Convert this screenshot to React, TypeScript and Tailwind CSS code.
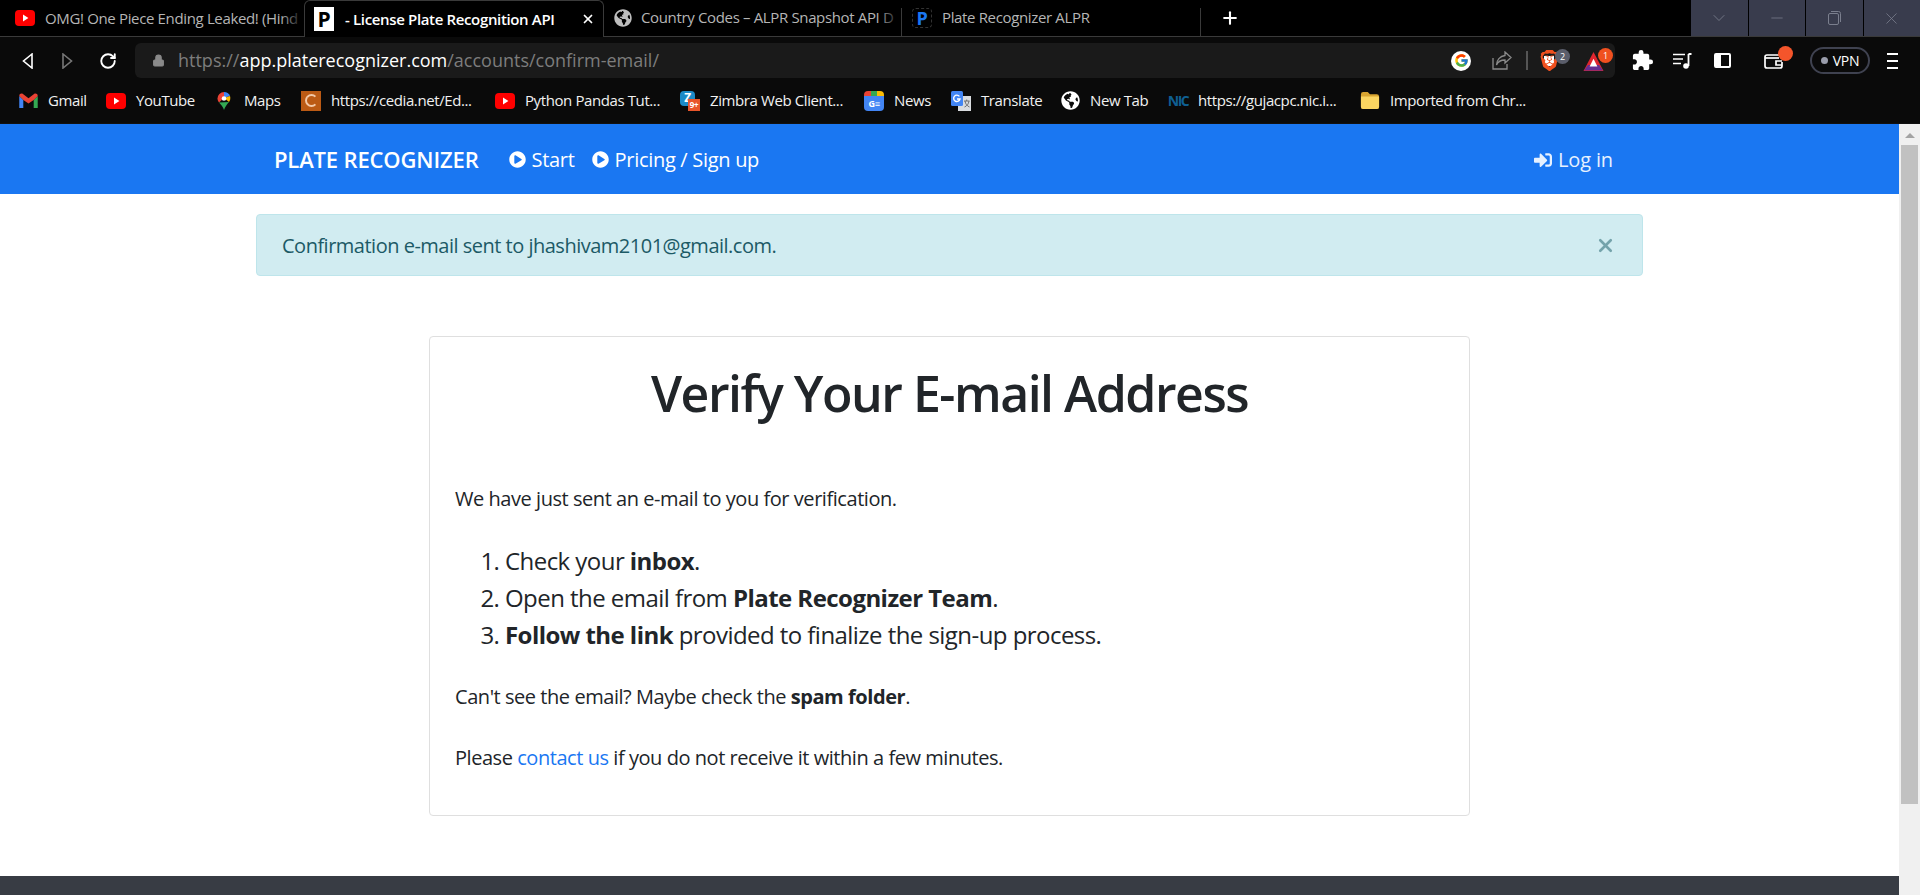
import { Lock, Plus, X, RotateCw, ChevronDown, Minus } from "lucide-react";
import { FaGlobeAmericas, FaPlayCircle, FaSignInAlt } from "react-icons/fa";
import { FcGoogle } from "react-icons/fc";
import { MdExtension } from "react-icons/md";
import { SiBrave } from "react-icons/si";
import type { ReactNode } from "react";

function YouTubeIcon() {
  return (
    <svg width="20" height="16" viewBox="0 0 20 16" className="shrink-0">
      <rect width="20" height="16" rx="4" fill="#f00" />
      <path d="M8 4.6 L13.4 8 L8 11.4 Z" fill="#fff" />
    </svg>
  );
}

function GmailIcon() {
  return (
    <svg width="19" height="15" viewBox="0 0 16 13" className="shrink-0">
      <path d="M0 2.5 V13 H3.5 V6 Z" fill="#4285f4" />
      <path d="M12.5 13 H16 V2.5 L12.5 6 Z" fill="#34a853" />
      <path d="M0 2.5 C0 0.5 2 0 3.2 0.8 L8 4.6 L12.8 0.8 C14 0 16 0.5 16 2.5 L12.5 6 L8 9 L3.5 6 Z" fill="#ea4335" />
    </svg>
  );
}

function MapsIcon() {
  return (
    <svg width="14" height="20" viewBox="0 0 14 18" className="shrink-0">
      <path d="M7 0 A6.5 6.5 0 0 0 0.5 6.5 C0.5 8 1 9 2 10.5 L7 6 Z" fill="#ea4335" />
      <path d="M7 0 A6.5 6.5 0 0 1 13 4 L7 6 Z" fill="#4285f4" />
      <path d="M13 4 C13.8 6.5 13 8.5 12 10 L7 6 Z" fill="#fbbc04" />
      <path d="M2 10.5 L12 10 C10 12.5 8 14.5 7 18 C6.4 15 4 13 2 10.5 Z" fill="#34a853" />
      <circle cx="7" cy="6.5" r="2.3" fill="#fff" />
    </svg>
  );
}

function CediaIcon() {
  return (
    <div className="flex h-5 w-5 shrink-0 items-center justify-center bg-[#bb5a14]">
      <div className="h-[13px] w-[13px] rounded-full border-2 border-[#f3c9a8] border-r-transparent" />
    </div>
  );
}

function ZimbraIcon() {
  return (
    <div className="relative h-5 w-5 shrink-0">
      <div className="flex h-[15px] w-[15px] items-center justify-center rounded-sm bg-[#1b8ac7] text-[12px] font-bold leading-none text-white">
        Z
      </div>
      <div className="absolute bottom-0 right-0 flex h-[12px] w-[12px] items-center justify-center bg-[#e8552a] text-[8px] font-bold leading-none text-white">
        9+
      </div>
    </div>
  );
}

function NewsIcon() {
  return (
    <div className="h-5 w-5 shrink-0 overflow-hidden rounded-sm">
      <div className="flex h-[5px]">
        <div className="w-1/3 bg-[#ea4335]" />
        <div className="w-1/3 bg-[#34a853]" />
        <div className="w-1/3 bg-[#fbbc04]" />
      </div>
      <div className="flex h-[15px] items-center justify-center bg-[#4285f4] text-[9px] font-bold leading-none text-white">
        G≡
      </div>
    </div>
  );
}

function TranslateIcon() {
  return (
    <svg width="20" height="20" viewBox="0 0 20 20" className="shrink-0">
      <rect x="7" y="5" width="13" height="15" fill="#d9dce0" />
      <path d="M13 10 H18.5 M15.7 8.5 V10 M14 10 C14.5 13 16 15 18.5 16 M18 10 C17.5 13 16 15 13.5 16" fill="none" stroke="#666" strokeWidth="0.9" />
      <rect width="12" height="15" rx="1.5" fill="#4285f4" />
      <path d="M8.4 5.4 A3.2 3.2 0 1 0 9 8 H6" fill="none" stroke="#fff" strokeWidth="1.4" />
    </svg>
  );
}

function NicIcon() {
  return (
    <div className="flex h-5 w-5 shrink-0 items-center justify-center text-[14px] font-bold leading-none tracking-[-1.5px] text-[#0f5f92]">
      NIC
    </div>
  );
}

function FolderIcon() {
  return (
    <svg width="20" height="17" viewBox="0 0 16 15" className="shrink-0">
      <path d="M0 2 Q0 0 2 0 H6 L8 2 H14 Q16 2 16 4 V13 Q16 15 14 15 H2 Q0 15 0 13 Z" fill="#d9a531" />
      <path d="M0 4 H16 V13 Q16 15 14 15 H2 Q0 15 0 13 Z" fill="#fbd561" />
    </svg>
  );
}

function Bookmark({ icon, label, width }: { icon: ReactNode; label: string; width: string }) {
  return (
    <div className={`flex shrink-0 items-center gap-[10px] ${width}`}>
      <div className="flex w-5 shrink-0 justify-center">{icon}</div>
      <span className="whitespace-nowrap text-[#f1f1f1]">{label}</span>
    </div>
  );
}

function BrowserChrome() {
  return (
    <div className="shrink-0 bg-black text-[15px] tracking-[-0.35px]">
      {/* Tabs */}
      <div className="flex h-[37px] items-stretch border-b border-[#3a3a3a]">
        <div className="relative flex w-[304px] shrink-0 items-center gap-[10px] overflow-hidden pl-[15px] text-[#b5b5b5]">
          <YouTubeIcon />
          <span className="whitespace-nowrap">OMG! One Piece Ending Leaked! (Hind</span>
          <div className="absolute inset-y-0 right-0 w-[24px] bg-gradient-to-r from-transparent to-black" />
        </div>
        <div className="relative -mb-px flex w-[300px] shrink-0 items-center rounded-t-md border border-b-0 border-[#3a3a3a] bg-black pl-[9px] text-white">
          <div className="flex h-[24px] w-5 items-center justify-center bg-white text-[21px] font-bold leading-none text-black">
            P
          </div>
          <span className="ml-[11px] whitespace-nowrap font-semibold tracking-[-0.35px]">
            - License Plate Recognition API
          </span>
          <X size={14} strokeWidth={3} className="absolute right-[8px] text-white" />
        </div>
        <div className="flex w-[298px] shrink-0 items-end">
          <div className="relative flex h-[28px] w-full items-center gap-[9px] overflow-hidden border-r border-[#3a3a3a] pl-[10px] pb-[9px] text-[#b5b5b5]">
            <FaGlobeAmericas size={18} className="shrink-0 text-[#bdbdbd]" />
            <span className="whitespace-nowrap">Country Codes – ALPR Snapshot API D</span>
            <div className="absolute inset-y-0 right-0 w-[24px] bg-gradient-to-r from-transparent to-black" />
          </div>
        </div>
        <div className="flex w-[299px] shrink-0 items-end">
          <div className="flex h-[28px] w-full items-center border-r border-[#3a3a3a] pl-[10px] pb-[9px] text-[#b5b5b5]">
            <span className="flex h-[20px] w-5 items-center justify-center rounded-sm border border-dashed border-[#333] text-[18px] font-bold leading-none text-[#1a77f2]">
              P
            </span>
            <span className="ml-[10px] whitespace-nowrap">Plate Recognizer ALPR</span>
          </div>
        </div>
        <div className="flex items-center pl-[19px]">
          <Plus size={20} strokeWidth={2.5} className="text-white" />
        </div>
        <div className="flex-1" />
        <div className="flex w-[229px] shrink-0 gap-px">
          <div className="flex h-[36px] flex-1 items-center justify-center bg-[#393c4d] text-[#7b7f8e]">
            <ChevronDown size={20} strokeWidth={1} />
          </div>
          <div className="flex h-[36px] flex-1 items-center justify-center bg-[#393c4d] text-[#7b7f8e]">
            <Minus size={18} strokeWidth={1} />
          </div>
          <div className="flex h-[36px] flex-1 items-center justify-center bg-[#393c4d] text-[#7b7f8e]">
            <svg width="13" height="14" viewBox="0 0 13 14" fill="none" stroke="currentColor">
              <rect x="0.5" y="2.5" width="10" height="11" rx="1.5" />
              <path d="M3 0.5 H10.5 Q12.5 0.5 12.5 2.5 V11" />
            </svg>
          </div>
          <div className="flex h-[36px] flex-1 items-center justify-center bg-[#393c4d] text-[#7b7f8e]">
            <X size={19} strokeWidth={1} />
          </div>
        </div>
      </div>

      {/* Toolbar */}
      <div className="flex h-[41px] items-end bg-[#0a0a0a]">
        <div className="flex h-[35px] w-[135px] shrink-0 items-center pl-[22px]">
          <svg width="11" height="16" viewBox="0 0 11 16">
            <path d="M10 1 L1.5 8 L10 15 Z" fill="none" stroke="#fff" strokeWidth="1.6" />
          </svg>
          <svg width="11" height="16" viewBox="0 0 11 16" className="ml-[29px]">
            <path d="M1 1 L9.5 8 L1 15 Z" fill="none" stroke="#777" strokeWidth="1.6" />
          </svg>
          <RotateCw size={18} strokeWidth={2.5} className="ml-[26px] text-white" />
        </div>
        <div className="flex h-[35px] w-[1480px] shrink-0 items-center rounded-md bg-[#1a1a1a] pl-[17px] text-[18px] tracking-[0px]">
          <Lock size={13} fill="#8a8a8a" className="mr-[13px] text-[#8a8a8a]" />
          <span className="text-[#7d7d7d]">https://</span>
          <span className="text-white">app.platerecognizer.com</span>
          <span className="text-[#7d7d7d]">/accounts/confirm-email/</span>
          <div className="ml-auto flex items-center pr-[10px]">
            <div className="flex h-5 w-5 items-center justify-center rounded-full bg-white">
              <FcGoogle size={15} />
            </div>
            <svg width="20" height="19" viewBox="0 0 20 19" fill="none" stroke="#8a8a8a" strokeWidth="1.3" className="ml-[21px]">
              <path d="M1 7 V18 H15 V13" />
              <path d="M13 1 L19 6.5 L13 12 V9 C9 9 6 10.5 4.5 14 C4.5 9 8 5 13 4.5 Z" />
            </svg>
            <div className="ml-[14px] h-[19px] w-[2px] bg-[#555]" />
            <div className="relative ml-[13px] flex h-[21px] w-[16px] items-center justify-center">
              <div className="absolute h-[10px] w-[10px] bg-white" />
              <SiBrave size={21} className="relative shrink-0 text-[#f0501f]" />
              <div className="absolute -right-[13px] -top-[1px] flex h-[15px] w-[15px] items-center justify-center rounded-full bg-[#5b5e6b] text-[9px] leading-none tracking-normal text-white">
                2
              </div>
            </div>
            <div className="relative ml-[25px]">
              <svg width="23" height="20" viewBox="0 0 18 18" className="block">
                <path d="M9 1 L18 18 H0 Z" fill="#e0262f" />
                <path d="M0.5 17.5 L4 12.5 H14 L17.5 17.5 Z" fill="#662d91" />
                <path d="M9 7 L12.5 14 H5.5 Z" fill="#fff" />
              </svg>
              <div className="absolute -right-[8px] -top-[3px] flex h-[15px] w-[15px] items-center justify-center rounded-full bg-[#f0501f] text-[9px] leading-none tracking-normal text-white">
                1
              </div>
            </div>
          </div>
        </div>
        <div className="flex h-[35px] flex-1 items-center pl-[16px]">
          <MdExtension size={23} className="shrink-0 text-white" />
          <svg width="19" height="16" viewBox="0 0 19 16" className="ml-[19px]">
            <path d="M0 1.5 H12 M0 6 H10 M0 10.5 H8" stroke="#fff" strokeWidth="1.6" />
            <path d="M15.5 1 V13 M15.5 1 H18.5" stroke="#fff" strokeWidth="1.8" />
            <circle cx="13" cy="13" r="2.8" fill="#fff" />
          </svg>
          <div className="ml-[22px] flex h-[15px] w-[17px] overflow-hidden rounded-[2px] border-2 border-white">
            <div className="w-[5px] bg-white" />
          </div>
          <div className="relative ml-[33px]">
            <svg width="19" height="16" viewBox="0 0 19 16" fill="none" stroke="#fff" strokeWidth="1.7" className="block">
              <path d="M17 4 V2 H3 Q1 2 1 4 V13 Q1 15 3 15 H16 Q18 15 18 13 V9" />
              <path d="M1 5 H15" />
              <path d="M18 8 H12 V12 H18" />
            </svg>
            <div className="absolute -right-[10px] -top-[7px] h-[15px] w-[15px] rounded-full bg-[#f4552b]" />
          </div>
          <div className="ml-[27px] flex h-[27px] w-[60px] items-center justify-center gap-[5px] rounded-full border-2 border-[#3f4250] text-[14px] tracking-[-0.3px] text-white">
            <span className="h-[7px] w-[7px] rounded-full bg-[#9a9dab]" />
            VPN
          </div>
          <div className="ml-[17px] flex w-[11px] flex-col gap-[5px]">
            <div className="h-[2px] bg-white" />
            <div className="h-[2px] bg-white" />
            <div className="h-[2px] bg-white" />
          </div>
        </div>
      </div>

      {/* Bookmarks */}
      <div className="flex h-[45px] items-center overflow-hidden bg-[#0a0a0a] pl-[18px] tracking-[-0.4px]">
        <Bookmark icon={<GmailIcon />} label="Gmail" width="w-[88px]" />
        <Bookmark icon={<YouTubeIcon />} label="YouTube" width="w-[108px]" />
        <Bookmark icon={<MapsIcon />} label="Maps" width="w-[87px]" />
        <Bookmark icon={<CediaIcon />} label="https://cedia.net/Ed..." width="w-[194px]" />
        <Bookmark icon={<YouTubeIcon />} label="Python Pandas Tut..." width="w-[185px]" />
        <Bookmark icon={<ZimbraIcon />} label="Zimbra Web Client..." width="w-[184px]" />
        <Bookmark icon={<NewsIcon />} label="News" width="w-[87px]" />
        <Bookmark icon={<TranslateIcon />} label="Translate" width="w-[109px]" />
        <Bookmark icon={<FaGlobeAmericas size={19} className="text-white" />} label="New Tab" width="w-[108px]" />
        <Bookmark icon={<NicIcon />} label="https://gujacpc.nic.i..." width="w-[192px]" />
        <Bookmark icon={<FolderIcon />} label="Imported from Chr..." width="w-[170px]" />
      </div>
    </div>
  );
}

export default function App() {
  return (
    <div className="flex h-screen flex-col overflow-hidden bg-white font-['Open_Sans',sans-serif]">
      <BrowserChrome />

      <div className="flex min-h-0 flex-1 border-t border-[#111]">
        <div className="flex min-w-0 flex-1 flex-col">
          {/* Navbar */}
          <nav className="flex h-[70px] shrink-0 items-center bg-[#1a77f2] pl-[274px] pr-[286px] pt-px text-white">
            <span className="text-[22px] font-semibold tracking-[-0.15px]">PLATE RECOGNIZER</span>
            <a className="ml-[30px] flex items-center gap-[6px] text-[20px] tracking-[-0.3px]">
              <FaPlayCircle size={17} />
              Start
            </a>
            <a className="ml-[17px] flex items-center gap-[6px] text-[20px] tracking-[-0.3px]">
              <FaPlayCircle size={17} />
              Pricing / Sign up
            </a>
            <a className="ml-auto flex items-center gap-[6px] text-[20px] tracking-[-0.15px] text-[#e6f1ff]">
              <FaSignInAlt size={18} />
              Log in
            </a>
          </nav>

          {/* Alert */}
          <div className="mx-[256px] mt-[20px] flex h-[62px] shrink-0 items-center justify-between rounded-[4px] border border-[#bee5eb] bg-[#d1ecf1] pl-[25px] pr-[26px] pt-px text-[20px] tracking-[-0.5px] text-[#1c5a66]">
            <span>Confirmation e-mail sent to jhashivam2101@gmail.com.</span>
            <X size={21} strokeWidth={3} className="text-[#74a3ab]" />
          </div>

          {/* Card */}
          <div className="mx-auto mt-[60px] h-[480px] w-[1041px] shrink-0 rounded-[4px] border border-[#dfdfdf] px-[25px] text-[#212529]">
            <h1 className="mt-[24px] text-center text-[50px] font-semibold leading-[65px] tracking-[-1.48px]">
              Verify Your E-mail Address
            </h1>
            <p className="mt-[59px] text-[20px] leading-[27px] tracking-[-0.45px]">
              We have just sent an e-mail to you for verification.
            </p>
            <ol className="ml-[25px] mt-[30px] list-decimal pl-[25px] text-[24px] leading-[37px] tracking-[-0.55px]">
              <li>
                Check your <b>inbox</b>.
              </li>
              <li>
                Open the email from <b>Plate Recognizer Team</b>.
              </li>
              <li>
                <b>Follow the link</b> provided to finalize the sign-up process.
              </li>
            </ol>
            <p className="mt-[30px] text-[20px] leading-[27px] tracking-[-0.45px]">
              Can't see the email? Maybe check the <b>spam folder</b>.
            </p>
            <p className="mt-[34px] text-[20px] leading-[27px] tracking-[-0.45px]">
              Please <a className="text-[#1a77f2]">contact us</a> if you do not receive it within a few minutes.
            </p>
          </div>

          {/* Footer */}
          <div className="mt-[60px] h-[60px] shrink-0 bg-[#383c44]" />
        </div>

        {/* Scrollbar */}
        <div className="flex w-[21px] shrink-0 flex-col items-center bg-[#f0f0f0]">
          <div className="mt-[9px] h-0 w-0 border-x-[5px] border-b-[5px] border-x-transparent border-b-[#a3a3a3]" />
          <div className="mt-[7px] h-[659px] w-[17px] bg-[#c1c1c1]" />
        </div>
      </div>
    </div>
  );
}
